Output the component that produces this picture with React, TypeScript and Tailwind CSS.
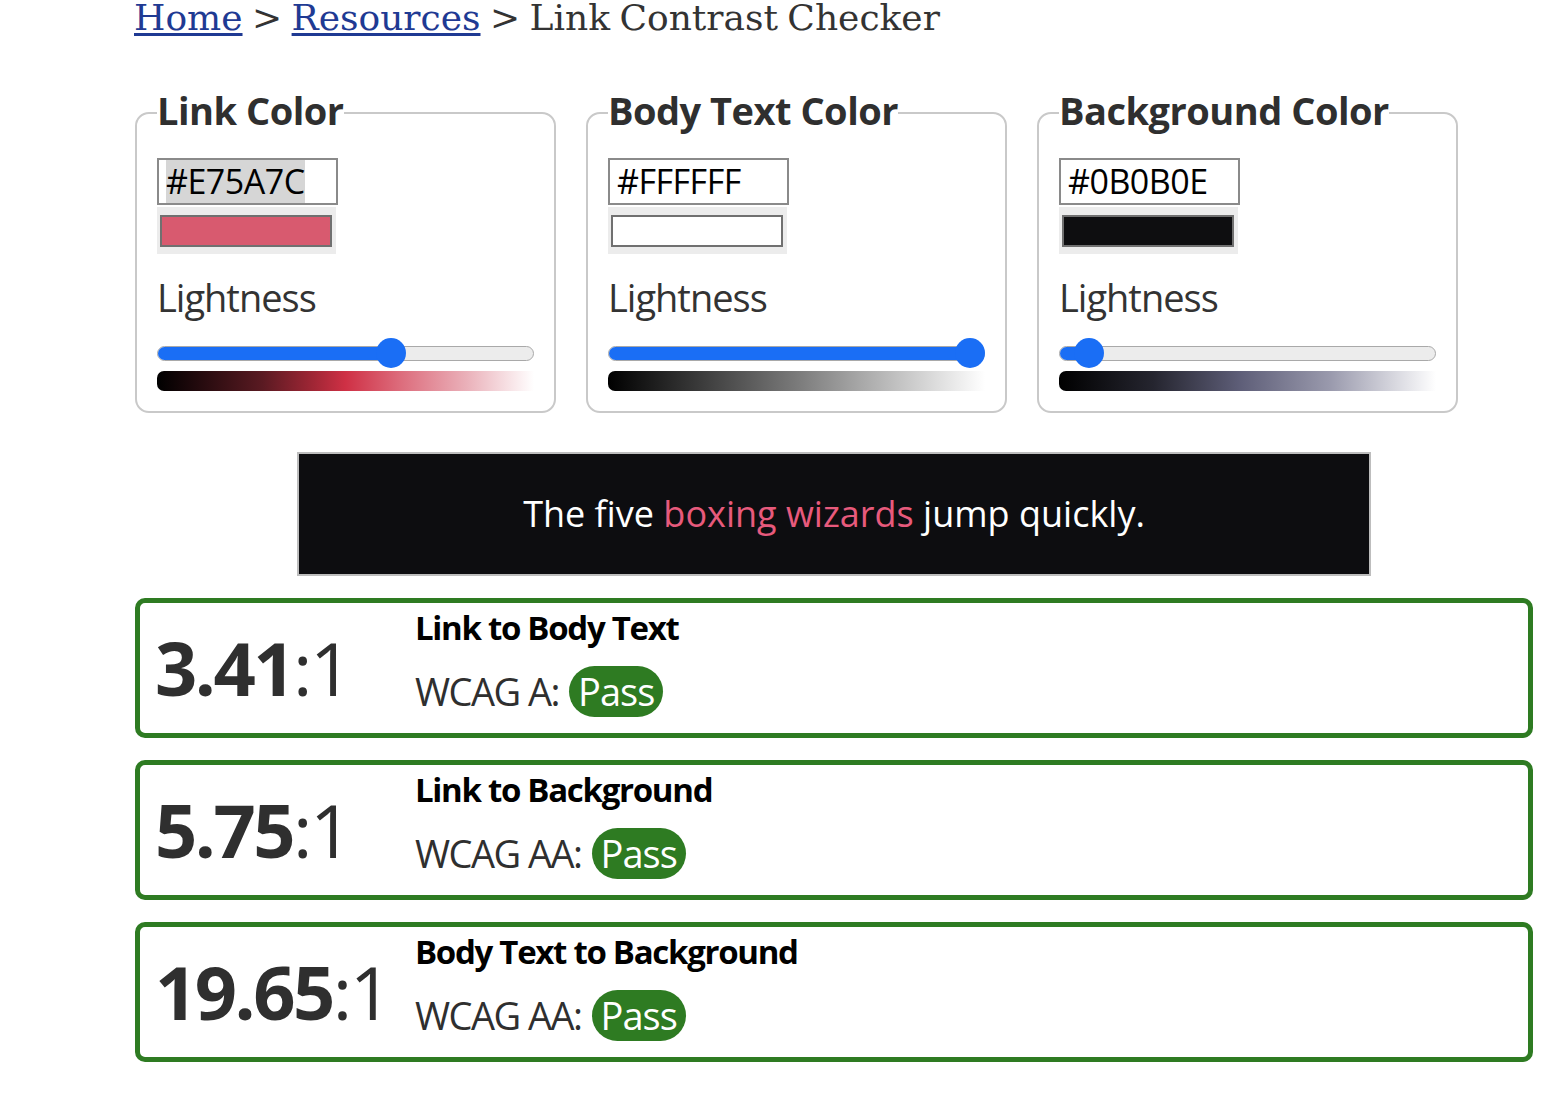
import React from "react";

type Col = {
  title: string;
  hex: string;
  swatch: string;
  selected?: boolean;
  pct: number;
  gradient: string;
};

const cols: Col[] = [
  {
    title: "Link Color",
    hex: "#E75A7C",
    swatch: "#d85a6f",
    selected: true,
    pct: 62,
    gradient:
      "linear-gradient(to right, #000000 0%, #5a1a22 28%, #a32736 42%, #cf3045 50%, #dc6a7a 64%, #eab0b9 82%, #ffffff 100%)",
  },
  {
    title: "Body Text Color",
    hex: "#FFFFFF",
    swatch: "#ffffff",
    pct: 96,
    gradient: "linear-gradient(to right, #000000 0%, #3c3c3c 25%, #7a7a7a 50%, #bdbdbd 75%, #ffffff 100%)",
  },
  {
    title: "Background Color",
    hex: "#0B0B0E",
    swatch: "#0e0e10",
    pct: 8,
    gradient:
      "linear-gradient(to right, #000000 0%, #25252f 25%, #5e5e78 48%, #9a9aad 72%, #ffffff 100%)",
  },
];

const results = [
  { ratio: "3.41", title: "Link to Body Text", level: "WCAG A:" },
  { ratio: "5.75", title: "Link to Background", level: "WCAG AA:" },
  { ratio: "19.65", title: "Body Text to Background", level: "WCAG AA:" },
];

function Slider({ pct }: { pct: number }) {
  return (
    <div className="relative h-[30px] w-full flex items-center">
      <div className="h-[15px] w-full rounded-full border border-[#a9a9a9] bg-[#ececec] overflow-hidden">
        <div className="h-full bg-[#1a6ef5]" style={{ width: `${pct}%` }} />
      </div>
      <div
        className="absolute top-0 h-[30px] w-[30px] rounded-full bg-[#1a6ef5] -translate-x-1/2"
        style={{ left: `${pct}%` }}
      />
    </div>
  );
}

function ColorBox({ c }: { c: Col }) {
  return (
    <fieldset className="border-2 border-[#c9c9c9] rounded-[14px] px-[20px] pt-[16px] pb-[20px] min-w-0">
      <legend className="text-[38px] leading-[52px] pb-[6px] font-bold text-[#2f2f2f] tracking-[-0.5px]">
        {c.title}
      </legend>
      <div className="w-[181px] h-[47px] border-2 border-[#8a8a8a] bg-white flex items-center pl-[7px] text-[34px] text-black tracking-[-0.5px]">
        <span className={c.selected ? "bg-[#d6d6d6] leading-[43px]" : "leading-[43px]"}>{c.hex}</span>
      </div>
      <div className="mt-[2px] w-[179px] h-[47px] bg-[#ececec] flex items-center px-[3px]">
        <div className="w-[172px] h-[32px] border-2 border-[#707070]" style={{ background: c.swatch }} />
      </div>
      <div className="mt-[17px] text-[38px] leading-[52px] text-[#333] tracking-[-1px]">Lightness</div>
      <div className="mt-[15px]">
        <Slider pct={c.pct} />
      </div>
      <div className="mt-[3px] h-[20px] w-full rounded-l-[7px]" style={{ background: c.gradient }} />
    </fieldset>
  );
}

export default function App() {
  return (
    <div className="w-[1558px] h-[1096px] overflow-hidden bg-white font-['Open_Sans',sans-serif]">
      <nav className="pl-[134px] -mt-[3px] font-['DejaVu_Serif',serif] text-[36px] leading-[42px] text-[#333] whitespace-nowrap [word-spacing:-2px]">
        <a className="text-[#1f3a93] underline underline-offset-[3px] decoration-[3px]" href="#">
          Home
        </a>{" "}
        &gt;{" "}
        <a className="text-[#1f3a93] underline underline-offset-[3px] decoration-[3px]" href="#">
          Resources
        </a>{" "}
        &gt; Link Contrast Checker
      </nav>

      <div className="ml-[135px] w-[1398px] mt-[45px]">
        <div className="w-[1323px] grid grid-cols-3 gap-[30px]">
          {cols.map((c) => (
            <ColorBox key={c.title} c={c} />
          ))}
        </div>

        <div className="mx-auto mt-[39px] w-[1074px] h-[124px] border-2 border-[#bdbdbd] bg-[#0d0d10] flex items-center justify-center text-white text-[36px]">
          <span>
            The five <span className="text-[#e75a7c]">boxing wizards</span> jump quickly.
          </span>
        </div>

        <div className="mt-[22px] flex flex-col gap-[22px]">
          {results.map((r) => (
            <div
              key={r.title}
              className="h-[140px] border-[5px] border-[#2e7b22] rounded-[10px] flex items-center pl-[15px]"
            >
              <div className="w-[260px] text-[74px] leading-none text-[#2f2f2f] tracking-[-2.5px]">
                <span className="font-bold">{r.ratio}</span>
                <span>:1</span>
              </div>
              <div className="self-start mt-[7px] flex flex-col">
                <div className="text-[33px] leading-[36px] font-bold text-black tracking-[-1.3px]">{r.title}</div>
                <div className="mt-[20px] flex items-center text-[38px] leading-[51px] text-[#2f2f2f] tracking-[-1.5px]">
                  <span>{r.level}</span>
                  <span className="ml-[10px] rounded-full bg-[#2e7b22] text-white px-[9px] tracking-[-1px]">Pass</span>
                </div>
              </div>
            </div>
          ))}
        </div>
      </div>
    </div>
  );
}
